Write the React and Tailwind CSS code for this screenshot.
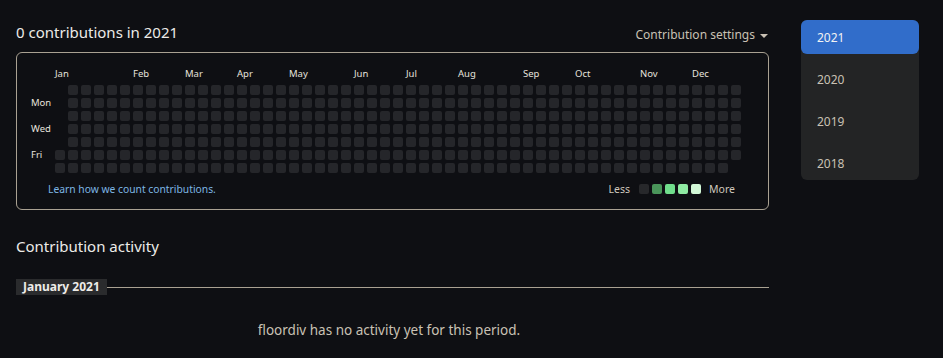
import React from 'react';

const months = [
  ['Jan', 0], ['Feb', 6], ['Mar', 10], ['Apr', 14], ['May', 18], ['Jun', 23],
  ['Jul', 27], ['Aug', 31], ['Sep', 36], ['Oct', 40], ['Nov', 45], ['Dec', 49],
];

// 2021 starts on a Friday and ends on a Friday
const cells = [];
for (let i = 0; i < 53 * 7; i++) {
  const empty = i < 5 || i === 53 * 7 - 1;
  cells.push(empty);
}

const years = ['2021', '2020', '2019', '2018'];

export default function App() {
  return (
    <div className="min-h-screen bg-[#0e0f13] font-['Noto_Sans',sans-serif] text-[#e6e3de]">
      <div className="flex gap-8 pt-5 pl-4">
        <div className="w-[753px]">
          {/* header */}
          <div className="flex items-center justify-between h-6">
            <h2 className="text-[15px] leading-6 text-[#ecebe8]">0 contributions in 2021</h2>
            <button className="flex items-center gap-[5px] mt-[5px] text-[12px] text-[#c9c1b4] pr-[1px]">
              Contribution settings
              <span className="w-0 h-0 border-x-[4px] border-x-transparent border-t-[4px] border-t-[#c9c1b4] mt-[2px]"></span>
            </button>
          </div>

          {/* calendar */}
          <div className="mt-2 h-[158px] rounded-md border border-[#a9a192] pt-[15px] pl-[14px] pr-[33px]">
            <div className="flex">
              <div className="w-6 shrink-0 pt-[17px] grid grid-rows-[repeat(7,10px)] gap-y-[3px] text-[9.5px] leading-[10px] text-[#e6e3de]">
                <span></span>
                <span>Mon</span>
                <span></span>
                <span>Wed</span>
                <span></span>
                <span>Fri</span>
                <span></span>
              </div>
              <div>
                <div className="grid grid-cols-[repeat(53,10px)] gap-x-[3px] h-3 mb-[5px] text-[9.5px] leading-3 text-[#e6e3de]">
                  {months.map(([m, c]) => (
                    <span key={m} className="whitespace-nowrap" style={{ gridColumnStart: c + 1, gridRowStart: 1 }}>{m}</span>
                  ))}
                </div>
                <div className="grid grid-flow-col grid-rows-[repeat(7,10px)] grid-cols-[repeat(53,10px)] gap-[3px]">
                  {cells.map((empty, i) => (
                    <span key={i} className={empty ? '' : 'rounded-[2px] bg-[#25262a]'}></span>
                  ))}
                </div>
              </div>
            </div>
            <div className="flex items-center justify-between mt-2 pl-[17px]">
              <a className="text-[10.3px] leading-4 text-[#7db6e3]">Learn how we count contributions.</a>
              <div className="flex items-center text-[10.5px] leading-4 text-[#cfc8bd]">
                <span className="mr-[9px]">Less</span>
                <span className="w-[10px] h-[10px] rounded-[2px] bg-[#27282b] mr-[3px]"></span>
                <span className="w-[10px] h-[10px] rounded-[2px] bg-[#4a955a] mr-[3px]"></span>
                <span className="w-[10px] h-[10px] rounded-[2px] bg-[#70de8c] mr-[3px]"></span>
                <span className="w-[10px] h-[10px] rounded-[2px] bg-[#8feba3] mr-[3px]"></span>
                <span className="w-[10px] h-[10px] rounded-[2px] bg-[#d2f8d7] mr-2"></span>
                <span>More</span>
              </div>
            </div>
          </div>

          {/* activity */}
          <h2 className="mt-6 text-[15px] leading-6 text-[#ecebe8]">Contribution activity</h2>
          <div className="mt-[21px] flex items-center">
            <span className="h-4 px-[7px] bg-[#2a2b2d] text-[12px] leading-4 font-bold text-[#eeece8]">January 2021</span>
            <span className="flex-1 h-px bg-[#a9a192]"></span>
          </div>
          <p className="mt-[25px] text-center pr-[7px] text-[13.5px] leading-5 text-[#c9c1b4]">
            floordiv has no activity yet for this period.
          </p>
        </div>

        {/* year list */}
        <div className="w-[118px]">
          <ul className="flex flex-col gap-2 rounded-md bg-[#232425]">
            {years.map((y, i) => (
              <li
                key={y}
                className={
                  i === 0
                    ? 'h-[34px] flex items-center pt-[1px] px-4 rounded-md bg-[#316dca] text-[12px] text-[#f3f3f3]'
                    : 'h-[34px] flex items-center pt-[1px] px-4 text-[12px] text-[#c9c1b4]'
                }
              >
                {y}
              </li>
            ))}
          </ul>
        </div>
      </div>
    </div>
  );
}
